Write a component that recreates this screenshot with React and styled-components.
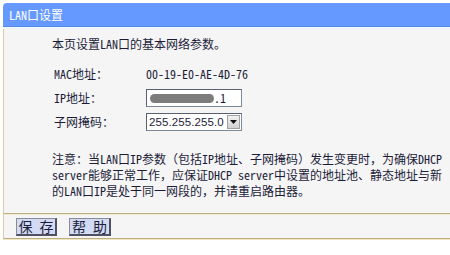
import React from "react";
import styled, { createGlobalStyle } from "styled-components";

const Global = createGlobalStyle`
  html, body { margin: 0; padding: 0; background: #ffffff; }
  body { width: 450px; height: 255px; overflow: hidden; }
`;

const FONT = `"Noto Sans Mono CJK SC", "Noto Sans CJK SC", "Liberation Mono", monospace`;

const Page = styled.div`
  padding: 3px 0 0 3px;
  font-family: ${FONT};
  font-size: 12px;
  color: #1c1c3a;
`;

const Panel = styled.div`
  display: flex;
  flex-direction: column;
  width: 447px;
`;

const TitleBar = styled.div`
  height: 23px;
  line-height: 23px;
  background: #6699ff;
  border-radius: 4px 0 0 0;
  border-bottom: 1px solid #5a88e6;
  color: #ffffff;
  padding-left: 6px;
  font-size: 12px;
`;

const Sheen = styled.div`
  height: 2px;
  background: #eef8fb;
`;

const Body = styled.div`
  border-left: 1px solid #dccca4;
  background: #f5f5f5;
  padding: 7px 0 0 48px;
  height: 184px;
  box-sizing: border-box;
`;

const Intro = styled.div`
  line-height: 16px;
  height: 16px;
`;

const Form = styled.div`
  display: grid;
  grid-template-columns: 92px auto;
  grid-auto-rows: 24px;
  align-items: center;
  margin: 10px 0 0 2px;
  & > :first-child, & > :nth-child(2) { height: 22px; line-height: 22px; }
`;

const Label = styled.div`
  line-height: 24px;
`;

const Value = styled.div`
  line-height: 24px;
`;

const FieldBox = styled.div`
  box-sizing: border-box;
  width: 96px;
  height: 18px;
  background: #ffffff;
  border: 1px solid #7f8a98;
  border-top-color: #5a6070;
  border-left-color: #5a6070;
  display: flex;
  align-items: center;
  padding-left: ${(p) => p.$pad}px;
  line-height: 16px;
  white-space: nowrap;
  overflow: hidden;
`;

const Redact = styled.span`
  display: inline-block;
  width: 64px;
  height: 9px;
  border-radius: 5px;
  background: #7c7c7c;
`;

const SelectText = styled.span`
  flex: 1;
  font-family: "Liberation Sans", Arial, sans-serif;
  font-size: 11.5px;
  letter-spacing: 0.1px;
`;

const ArrowBox = styled.span`
  flex: none;
  width: 13px;
  height: 14px;
  margin-right: 1px;
  box-sizing: border-box;
  background: linear-gradient(#f2f2f2, #d0d0d0);
  border: 1px solid #a0a0a0;
  display: flex;
  align-items: center;
  justify-content: center;
`;

const Note = styled.div`
  margin-top: 17px;
  width: 398px;
  line-height: 16px;
`;

const Footer = styled.div`
  border-left: 1px solid #dccca4;
  border-top: 1px solid #bcae7e;
  border-bottom: 1px solid #bcae7e;
  box-shadow: inset 0 1px 0 #f2ead0, 0 1px 0 #efe6c6;
  background: #f5f5f5;
  height: 24px;
  display: flex;
  align-items: center;
  gap: 12px;
  padding-left: 12px;
`;

const Button = styled.button`
  font-family: "Noto Sans CJK SC", sans-serif;
  font-size: 14px;
  line-height: 14px;
  color: #1c1c3a;
  background: #d2daf4;
  border: 1px solid #8a8a9a;
  border-right: 2px solid #505060;
  border-bottom: 2px solid #505060;
  height: 18px;
  width: ${(p) => p.$w}px;
  padding: 0;
  word-spacing: 4px;
  margin-top: 1px;
`;

export default function App() {
  return (
    <>
      <Global />
      <Page>
        <Panel>
          <TitleBar>LAN口设置</TitleBar>
          <Sheen />
          <Body>
            <Intro>本页设置LAN口的基本网络参数。</Intro>
            <Form>
              <Label>MAC地址：</Label>
              <Value>00-19-E0-AE-4D-76</Value>
              <Label>IP地址：</Label>
              <Value>
                <FieldBox $pad={3}>
                  <Redact />
                  <span>.1</span>
                </FieldBox>
              </Value>
              <Label>子网掩码：</Label>
              <Value>
                <FieldBox $pad={2}>
                  <SelectText>255.255.255.0</SelectText>
                  <ArrowBox>
                    <svg width="7" height="4" viewBox="0 0 7 4">
                      <path d="M0 0H7L3.5 4Z" fill="#111" />
                    </svg>
                  </ArrowBox>
                </FieldBox>
              </Value>
            </Form>
            <Note>
              注意：当LAN口IP参数（包括IP地址、子网掩码）发生变更时，为确保DHCP server能够正常工作，应保证DHCP server中设置的地址池、静态地址与新的LAN口IP是处于同一网段的，并请重启路由器。
            </Note>
          </Body>
          <Footer>
            <Button $w={41}>保 存</Button>
            <Button $w={42}>帮 助</Button>
          </Footer>
        </Panel>
      </Page>
    </>
  );
}
